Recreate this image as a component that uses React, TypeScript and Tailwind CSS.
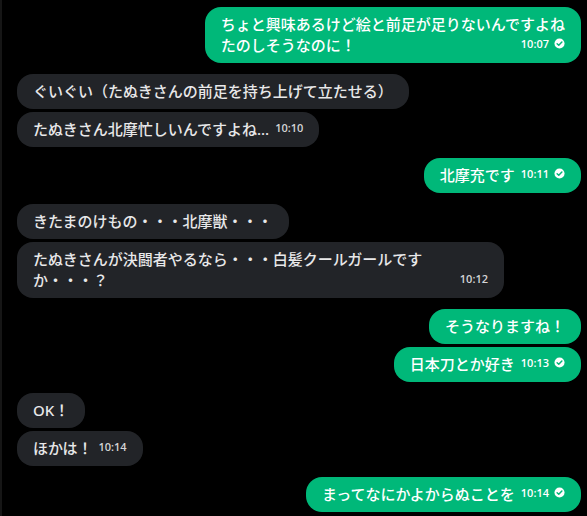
import React from "react";

type Msg = { me: boolean; text: string; time?: string };

const groups: Msg[][] = [
  [
    {
      me: true,
      text: "ちょと興味あるけど絵と前足が足りないんですよね\nたのしそうなのに！",
      time: "10:07",
    },
  ],
  [
    { me: false, text: "ぐいぐい（たぬきさんの前足を持ち上げて立たせる）" },
    { me: false, text: "たぬきさん北摩忙しいんですよね...", time: "10:10" },
  ],
  [{ me: true, text: "北摩充です", time: "10:11" }],
  [
    { me: false, text: "きたまのけもの・・・北摩獣・・・" },
    {
      me: false,
      text: "たぬきさんが決闘者やるなら・・・白髪クールガールですか・・・？",
      time: "10:12",
    },
  ],
  [
    { me: true, text: "そうなりますね！" },
    { me: true, text: "日本刀とか好き", time: "10:13" },
  ],
  [
    { me: false, text: "OK！" },
    { me: false, text: "ほかは！", time: "10:14" },
  ],
  [{ me: true, text: "まってなにかよからぬことを", time: "10:14" }],
];

function Check() {
  return (
    <svg width="11" height="11" viewBox="0 0 12 12" className="block">
      <circle cx="6" cy="6" r="5.5" fill="#ffffff" />
      <path
        d="M3.4 6.2 L5.2 7.9 L8.6 4.4"
        fill="none"
        stroke="#00b879"
        strokeWidth="1.6"
        strokeLinecap="round"
        strokeLinejoin="round"
      />
    </svg>
  );
}

function Time({ m }: { m: Msg }) {
  return (
    <span
      className={`inline-flex items-center gap-[5px] text-[11px] leading-none font-semibold ${
        m.me ? "text-white" : "text-[#d4d4d6]"
      }`}
      style={{ fontFamily: '"Open Sans", "Liberation Sans", sans-serif' }}
    >
      {m.time}
      {m.me && <Check />}
    </span>
  );
}

function Bubble({ m }: { m: Msg }) {
  return (
    <div
      className={`relative w-fit max-w-[487px] rounded-[16px] px-4 py-[7px] text-[15px] leading-[21px] whitespace-pre-wrap ${
        m.me
          ? "self-end bg-[#00b879] text-white"
          : "self-start bg-[#222428] text-[#e8e8e9]"
      }`}
    >
      {m.text}
      {m.time && (
        <>
          <span className="invisible ml-[6px] inline-block">
            <Time m={m} />
          </span>
          <span className="absolute right-4 bottom-[10px]">
            <Time m={m} />
          </span>
        </>
      )}
    </div>
  );
}

export default function App() {
  return (
    <div
      className="h-[516px] w-full overflow-hidden bg-black border-l-2 border-[#161616]"
      style={{
        fontFamily: '"Noto Sans", "Noto Sans CJK JP", sans-serif',
        fontWeight: 500,
      }}
    >
      <div className="flex flex-col gap-[11px] pt-[7px] pl-[15px] pr-[6px]">
        {groups.map((g, i) => (
          <div key={i} className="flex flex-col gap-[3px]">
            {g.map((m, j) => (
              <Bubble key={j} m={m} />
            ))}
          </div>
        ))}
      </div>
    </div>
  );
}
